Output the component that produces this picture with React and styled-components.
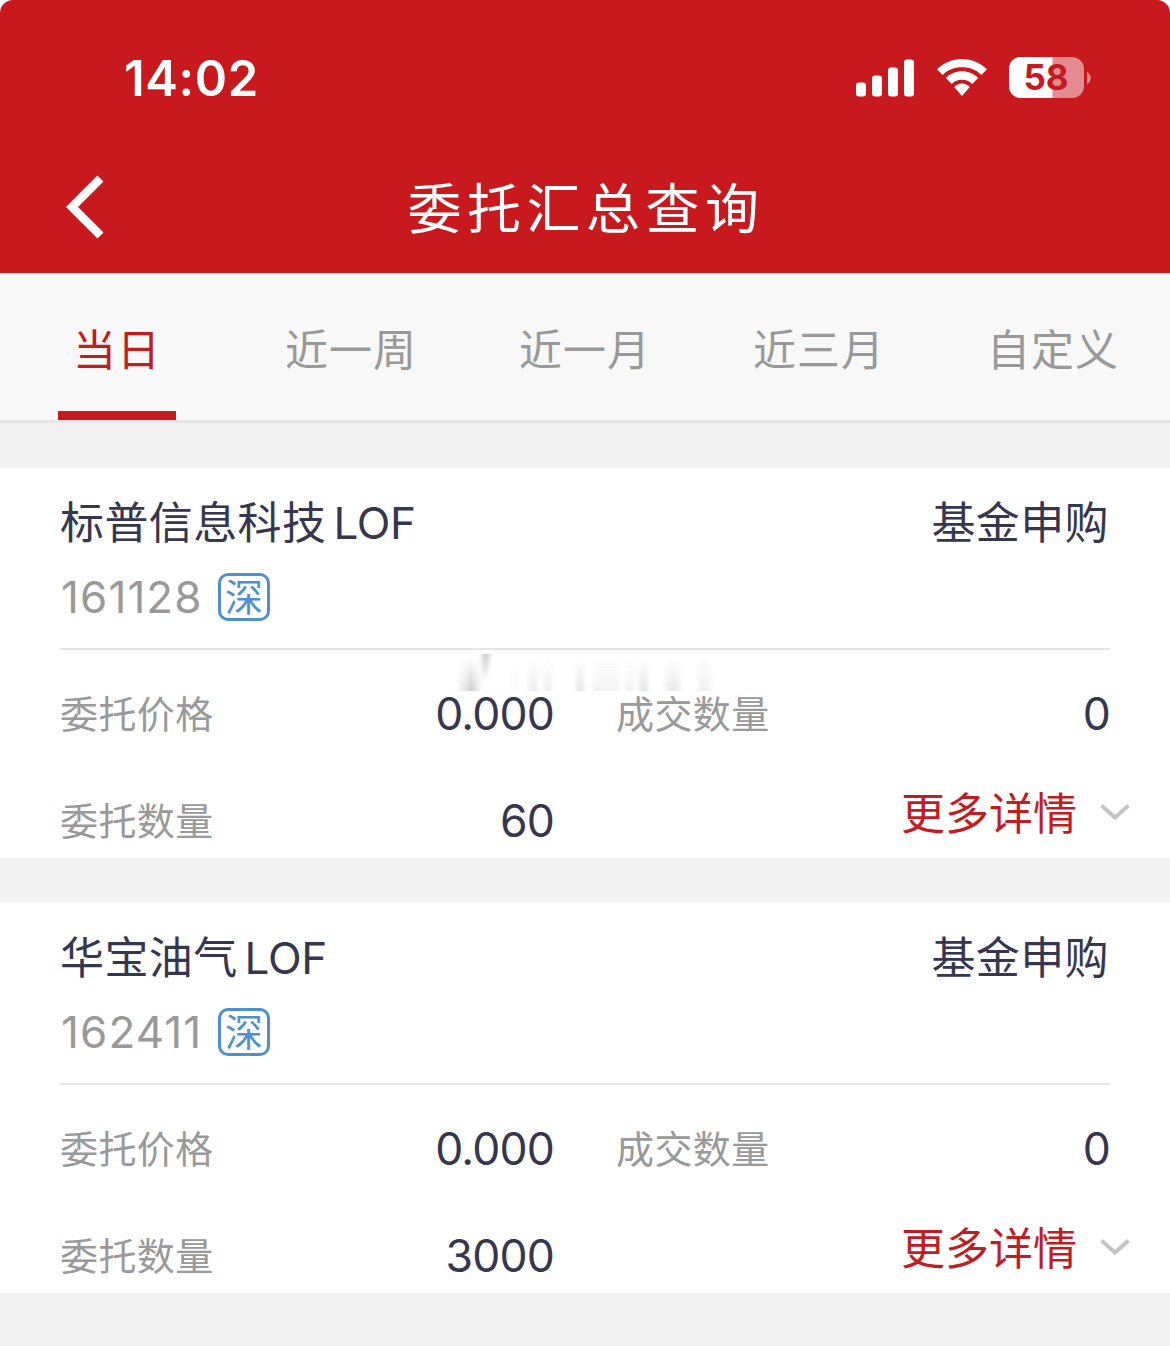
import React from "react";
import styled, { createGlobalStyle } from "styled-components";

const colors = {
  brand: "#c7191e",
  active: "#bf1d23",
  dark: "#36374f",
  medium: "#999999",
  blue: "#4f8fcf",
  bg: "#f1f1f1",
  border: "#e6e6e6",
};

const GlobalStyle = createGlobalStyle`
  * {
    box-sizing: border-box;
  }
  body {
    margin: 0;
    background: #fff;
    font-family: Inter, "Noto Sans CJK SC", sans-serif;
  }
`;

const Page = styled.div`
  width: 1170px;
  height: 1346px;
  overflow: hidden;
  background: linear-gradient(#fff 50px, ${colors.bg} 50px);
`;

const Header = styled.header`
  height: 273px;
  background: ${colors.brand};
  border-radius: 13px 13px 0 0;
  color: #fff;
`;

const StatusBar = styled.div`
  display: flex;
  align-items: center;
  justify-content: space-between;
  height: 155px;
  padding: 0 78px 0 124px;
`;

const Clock = styled.span`
  padding-top: 2px;
  font-size: 49px;
  font-weight: 600;
  letter-spacing: 0.6px;
`;

const StatusIcons = styled.div`
  display: flex;
  align-items: center;
  gap: 22px;
`;

const NavBar = styled.div`
  display: grid;
  grid-template-columns: 120px 1fr 120px;
  align-items: center;
  height: 104px;
`;

const BackButton = styled.button`
  display: flex;
  padding: 0 0 0 64px;
  border: 0;
  background: none;
  color: inherit;
`;

const Title = styled.h1`
  margin: 0;
  padding-top: 5px;
  font-size: 54px;
  font-weight: 400;
  line-height: 80px;
  letter-spacing: 5.5px;
  text-indent: 2px;
  text-align: center;
`;

const Tabs = styled.nav`
  display: grid;
  grid-template-columns: repeat(5, 1fr);
  height: 150px;
  background: #f8f8f8;
  border-bottom: 3px solid ${colors.border};
`;

const Tab = styled.button`
  display: flex;
  flex-direction: column;
  align-items: center;
  justify-content: space-between;
  padding: 47px 0 0;
  border: 0;
  background: none;
  color: ${props => (props.$active ? colors.active : colors.medium)};
  font-family: inherit;
  font-size: 43px;
  line-height: 60px;
  letter-spacing: 1px;
  white-space: nowrap;

  &::after {
    content: "";
    width: 118px;
    height: 9px;
    background: ${props => (props.$active ? colors.brand : "transparent")};
  }
`;

const OrderList = styled.main`
  display: flex;
  flex-direction: column;
  gap: 45px;
  padding-top: 45px;
`;

const Card = styled.section`
  position: relative;
  height: 390px;
  padding: 25px 60px 0;
  background: #fff;
`;

const CardTitle = styled.div`
  display: flex;
  justify-content: space-between;
  height: 60px;
  color: ${colors.dark};
  font-size: 44px;
  line-height: 60px;
  letter-spacing: 0.4px;
`;

const OrderType = styled.span`
  margin-right: 1px;
`;

const Latin = styled.span`
  margin-left: 7px;
  letter-spacing: -0.3px;
`;

const CodeRow = styled.div`
  display: flex;
  align-items: center;
  gap: 16px;
  height: 48px;
  margin-top: 20px;
  color: ${colors.medium};
  font-size: 44px;
`;

const Code = styled.span`
  width: 142px;
  padding-left: 1px;
  letter-spacing: 1.1px;
  white-space: nowrap;
`;

const Market = styled.span`
  width: 52px;
  height: 48px;
  border: 3px solid ${colors.blue};
  border-radius: 10px;
  color: ${colors.blue};
  font-size: 38px;
  line-height: 43px;
  text-align: center;
`;

const Metrics = styled.div`
  display: grid;
  grid-template-columns: 494px 494px;
  column-gap: 62px;
  row-gap: 47px;
  margin-top: 27px;
  padding-top: 34px;
  border-top: 2px solid ${colors.border};
`;

const Metric = styled.div`
  display: flex;
  align-items: center;
  justify-content: space-between;
  height: 60px;
`;

const Label = styled.span`
  padding-bottom: 5px;
  color: ${colors.medium};
  font-size: 38px;
  letter-spacing: 0.4px;
`;

const Value = styled.span`
  color: ${colors.dark};
  font-size: 44.5px;
  letter-spacing: -0.8px;
`;

const MoreButton = styled.button`
  display: flex;
  align-items: center;
  justify-content: flex-end;
  gap: 22px;
  height: 60px;
  margin: -8px -21px 0 0;
  padding: 0;
  border: 0;
  background: none;
  color: ${colors.active};
  font-family: inherit;
  font-size: 44px;
  line-height: 60px;
`;

const MoreText = styled.span`
  padding-top: 2px;
`;

const Smudge = styled.svg`
  position: absolute;
  top: 186px;
  left: 455px;
`;

const tabs = ["当日", "近一周", "近一月", "近三月", "自定义"];

const orders = [
  { name: "标普信息科技", code: "161128", price: "0.000", filled: "0", amount: "60", smudged: true },
  { name: "华宝油气", code: "162411", price: "0.000", filled: "0", amount: "3000" },
];

// x, width, opacity of each faded streak
const streaks = [
  [5, 20, 0.14],
  [13, 6, 0.18],
  [57, 6, 0.04],
  [74, 9, 0.11],
  [89, 8, 0.1],
  [121, 8, 0.15],
  [138, 26, 0.07],
  [170, 9, 0.07],
  [184, 9, 0.15],
  [211, 14, 0.12],
  [243, 13, 0.09],
];

const SignalIcon = () => (
  <svg width="59" height="42" viewBox="0 0 59 42" fill="currentColor">
    <rect x="0" y="25.500" width="10" height="14" rx="3" />
    <rect x="16" y="18.500" width="10" height="21" rx="3" />
    <rect x="32" y="10.500" width="10" height="29" rx="3" />
    <rect x="48" y="2.500" width="10" height="37" rx="3" />
  </svg>
);

const WifiIcon = () => (
  <svg width="50" height="42" viewBox="0 0 50 42" fill="currentColor">
    <path d="M25 2C15.500 2 6.500 5.700 0 12.300L5.600 18C10.500 12.900 17.500 10.300 25 10.300S39.500 12.900 44.400 18L50 12.300C43.500 5.700 34.500 2 25 2Z" />
    <path d="M25 14.300C18.900 14.300 13.200 16.700 8.900 20.900L14.800 26.900C17.500 24.200 21 22.800 25 22.800S32.500 24.200 35.200 26.900L41.100 20.900C36.800 16.700 31.100 14.300 25 14.300Z" />
    <path d="M25 26.500C22.200 26.500 19.400 27.800 17.200 30.100L25 39L32.800 30.100C30.600 27.800 27.800 26.500 25 26.500Z" />
  </svg>
);

const BatteryIcon = ({ level }) => (
  <svg width="83" height="42" viewBox="0 0 83 42">
    <defs>
      <clipPath id="battery-body">
        <rect width="75" height="41" rx="12" />
      </clipPath>
    </defs>
    <g clipPath="url(#battery-body)">
      <rect width="75" height="42" fill="#e38b8f" />
      <rect width={(75 * level) / 100} height="42" fill="#fff" />
    </g>
    <path d="M78 15C83 17 83 25 78 27Z" fill="#e38b8f" />
    <text
      x="37"
      y="33"
      fill={colors.brand}
      fontSize="35"
      fontWeight="700"
      textAnchor="middle"
    >
      {level}
    </text>
  </svg>
);

const BackIcon = () => (
  <svg width="42" height="66" viewBox="0 0 42 66" fill="none">
    <path d="M36.500 4.500L8 33L36.500 61.500" stroke="currentColor" strokeWidth="8.500" />
  </svg>
);

const ChevronIcon = () => (
  <svg width="32" height="20" viewBox="0 0 32 20" fill="none">
    <path d="M2.500 2.500L16 14.500L29.500 2.500" stroke="#c4c4c6" strokeWidth="4" />
  </svg>
);

const StreakOverlay = () => (
  <Smudge width="265" height="38" viewBox="0 0 265 38">
    <defs>
      <linearGradient id="fade" x1="0" y1="0" x2="0" y2="1">
        <stop offset="0" stopColor="#555" stopOpacity="0" />
        <stop offset="1" stopColor="#555" />
      </linearGradient>
      <linearGradient id="fade-up" x1="0" y1="1" x2="0" y2="0">
        <stop offset="0" stopColor="#555" stopOpacity="0" />
        <stop offset="1" stopColor="#555" />
      </linearGradient>
      <filter id="soften" x="-50%" width="200%">
        <feGaussianBlur stdDeviation="2.200 0" />
      </filter>
    </defs>
    <g filter="url(#soften)">
      {streaks.map(([x, width, opacity]) => (
        <rect key={x} x={x} y="4" width={width} height="33" fill="url(#fade)" opacity={opacity} />
      ))}
      <path d="M27 0H35L31 30H27Z" fill="url(#fade-up)" opacity="0.3" />
    </g>
  </Smudge>
);

const OrderCard = ({ order }) => (
  <Card>
    <CardTitle>
      <span>
        {order.name}
        <Latin>LOF</Latin>
      </span>
      <OrderType>基金申购</OrderType>
    </CardTitle>
    <CodeRow>
      <Code>{order.code}</Code>
      <Market>深</Market>
    </CodeRow>
    <Metrics>
      <Metric>
        <Label>委托价格</Label>
        <Value>{order.price}</Value>
      </Metric>
      <Metric>
        <Label>成交数量</Label>
        <Value>{order.filled}</Value>
      </Metric>
      <Metric>
        <Label>委托数量</Label>
        <Value>{order.amount}</Value>
      </Metric>
      <MoreButton>
        <MoreText>更多详情</MoreText>
        <ChevronIcon />
      </MoreButton>
    </Metrics>
    {order.smudged && <StreakOverlay />}
  </Card>
);

const App = () => (
  <Page>
    <GlobalStyle />
    <Header>
      <StatusBar>
        <Clock>14:02</Clock>
        <StatusIcons>
          <SignalIcon />
          <WifiIcon />
          <BatteryIcon level={58} />
        </StatusIcons>
      </StatusBar>
      <NavBar>
        <BackButton aria-label="返回">
          <BackIcon />
        </BackButton>
        <Title>委托汇总查询</Title>
      </NavBar>
    </Header>
    <Tabs>
      {tabs.map((tab, index) => (
        <Tab key={tab} $active={index === 0}>
          {tab}
        </Tab>
      ))}
    </Tabs>
    <OrderList>
      {orders.map(order => (
        <OrderCard key={order.code} order={order} />
      ))}
    </OrderList>
  </Page>
);

export default App;
